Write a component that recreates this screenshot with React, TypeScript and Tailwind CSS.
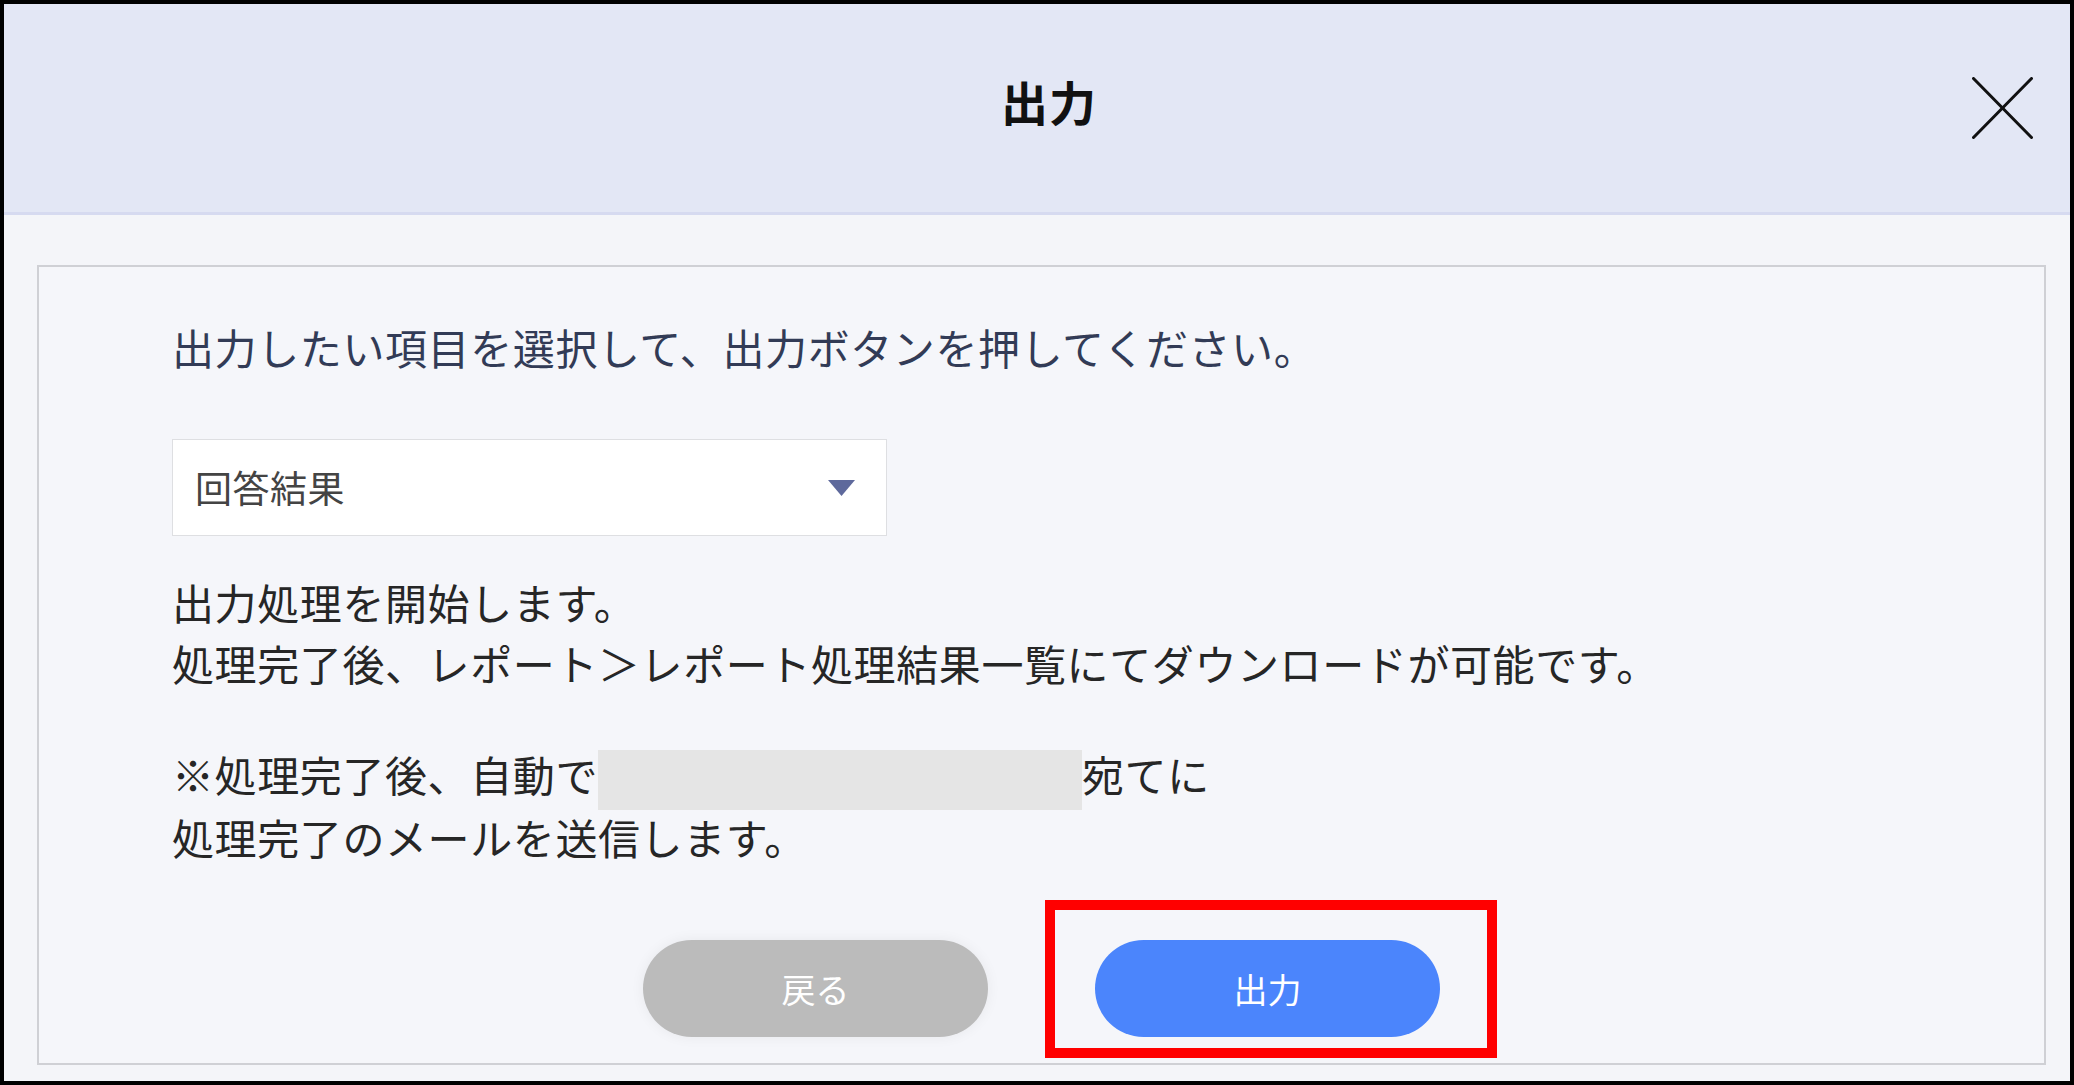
import React from "react";

export default function App() {
  return (
    <div className="w-[2074px] h-[1085px] bg-white font-['Noto_Sans_CJK_JP',sans-serif]">
      <div className="w-full h-full border-[4px] border-black bg-[#f4f5f9] flex flex-col">
        {/* Header */}
        <div className="h-[211px] shrink-0 bg-[#e3e7f5] border-b-[3px] border-[#d6daf0] grid grid-cols-[1fr_auto_1fr] items-center">
          <div />
          <div className="ml-[24px] mb-[16px] text-[47px] font-bold text-[#111] leading-none tracking-[1px]">出力</div>
          <div className="flex justify-end pr-[37px]">
            <svg width="61" height="62" viewBox="0 0 61 62" fill="none">
              <line x1="1.5" y1="1.5" x2="59.5" y2="60.5" stroke="#111" strokeWidth="3" strokeLinecap="round" />
              <line x1="59.5" y1="1.5" x2="1.5" y2="60.5" stroke="#111" strokeWidth="3" strokeLinecap="round" />
            </svg>
          </div>
        </div>

        {/* Body panel */}
        <div className="mt-[50px] ml-[33px] mr-[24px] h-[800px] border-2 border-[#cfd0d5] bg-[#f5f6fa] flex flex-col pl-[133px] pt-[50px] tracking-[0.6px]">
          <p className="text-[42px] leading-[60px] text-[#323b56] whitespace-nowrap">
            出力したい項目を選択して、出力ボタンを押してください。
          </p>

          <div className="mt-[62px] w-[715px] h-[97px] bg-white border border-[#dedfe2] flex items-center justify-between pl-[22px] pr-[31px]">
            <span className="text-[37px] text-[#444] leading-none tracking-[0.5px]">回答結果</span>
            <svg width="27" height="16" viewBox="0 0 27 16">
              <polygon points="0,0 27,0 13.5,16" fill="#5e699c" />
            </svg>
          </div>

          <div className="mt-[35px] text-[42px] leading-[61px] text-[#262626] whitespace-nowrap">
            <p>出力処理を開始します。</p>
            <p>処理完了後、レポート＞レポート処理結果一覧にてダウンロードが可能です。</p>
          </div>

          <div className="mt-[57px] text-[42px] text-[#262626] whitespace-nowrap">
            <div className="flex items-start h-[60px]">
              <span className="leading-[48px]">※処理完了後、自動で</span>
              <span className="inline-block w-[484px] h-[60px] bg-[#e5e5e5]" />
              <span className="leading-[48px]">宛てに</span>
            </div>
            <p className="-mt-[3px] leading-[60px]">処理完了のメールを送信します。</p>
          </div>

          <div className="mt-[73px] -ml-[133px] flex justify-center gap-[107px] tracking-normal">
            <button className="w-[345px] h-[97px] rounded-full bg-[#bbbbbb] text-white text-[34px] leading-none shadow-[0_0_14px_rgba(0,0,0,0.06)]">
              戻る
            </button>
            <div className="relative">
              <button className="w-[345px] h-[97px] rounded-full bg-[#4b85fc] text-white text-[34px] leading-none">
                出力
              </button>
              <div className="absolute left-[-50px] top-[-40px] w-[452px] h-[158px] border-[10px] border-[#ff0000] pointer-events-none" />
            </div>
          </div>
        </div>
      </div>
    </div>
  );
}
